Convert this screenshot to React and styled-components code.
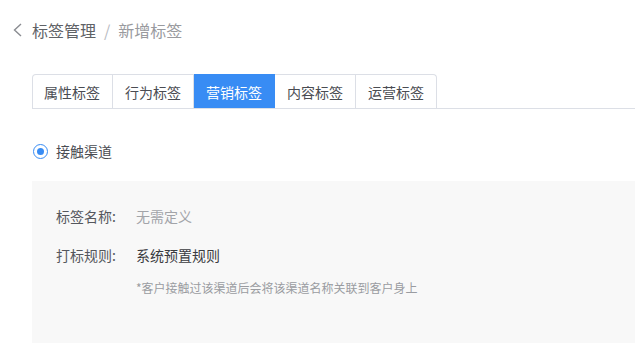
import React from "react";
import styled, { createGlobalStyle } from "styled-components";

const Global = createGlobalStyle`
  html, body { margin: 0; padding: 0; background: #fff; }
  body { font-family: "Noto Sans CJK SC", "Noto Sans", sans-serif; overflow: hidden; }
  * { box-sizing: border-box; }
`;

const Page = styled.div`
  width: 635px;
  height: 348px;
  padding: 18px 0 0 32px;
  overflow: hidden;
`;

const Crumbs = styled.div`
  display: flex;
  align-items: center;
  height: 24px;
  font-size: 16px;
  line-height: 24px;
  margin-left: -20px;
`;

const Back = styled.span`
  display: inline-flex;
  width: 12px;
  margin-right: 8px;
`;

const Crumb = styled.span`
  color: ${(p) => (p.$current ? "#999a9e" : "#606266")};
`;

const Sep = styled.span`
  color: #b8bbc2;
  margin: 0 8px;
`;

const TabBar = styled.div`
  display: flex;
  margin-top: 32px;
  border-bottom: 1px solid #dcdfe6;
`;

const Tab = styled.div`
  flex-shrink: 0;
  white-space: nowrap;
  height: 34px;
  padding: 0 12px;
  display: flex;
  align-items: center;
  justify-content: center;
  font-size: 14px;
  color: ${(p) => (p.$active ? "#fff" : "#4a4c52")};
  background: ${(p) => (p.$active ? "#388cf4" : "#fff")};
  border: 1px solid ${(p) => (p.$active ? "#388cf4" : "#dcdfe6")};
  border-bottom: none;
  border-left: ${(p) => (p.$first ? "1px solid #dcdfe6" : "none")};
  padding-left: ${(p) => (p.$first ? "11px" : "12px")};
  border-radius: ${(p) => (p.$first ? "4px 0 0 0" : p.$last ? "0 4px 0 0" : "0")};
`;

const RadioRow = styled.div`
  display: flex;
  align-items: center;
  margin-top: 32px;
  height: 20px;
  font-size: 14px;
  color: #4a4c52;
`;

const RadioCircle = styled.span`
  width: 15px;
  height: 15px;
  border-radius: 50%;
  border: 1.5px solid #388cf4;
  display: flex;
  align-items: center;
  justify-content: center;
  margin-left: 1px;
  margin-right: 8px;
  &::after {
    content: "";
    width: 7px;
    height: 7px;
    border-radius: 50%;
    background: #388cf4;
  }
`;

const Panel = styled.div`
  margin-top: 20px;
  background: #f8f8f8;
  height: 162px;
  padding: 25px 24px 0;
`;

const Row = styled.div`
  display: flex;
  align-items: center;
  height: 20px;
  font-size: 14px;
  line-height: 20px;
  margin-bottom: ${(p) => p.$mb || 0}px;
`;

const Label = styled.span`
  width: 80px;
  color: #55575d;
`;

const Value = styled.span`
  color: ${(p) => (p.$muted ? "#a2a4a9" : "#3a3b3f")};
`;

const Note = styled.div`
  padding-left: 80px;
  font-size: 12px;
  line-height: 18px;
  color: #9a9ca1;
`;

const tabs = ["属性标签", "行为标签", "营销标签", "内容标签", "运营标签"];

export default function App() {
  return (
    <>
      <Global />
      <Page>
        <Crumbs>
          <Back>
            <svg width="11" height="16" viewBox="0 0 11 16">
              <path d="M9 2 L2.5 8 L9 14" fill="none" stroke="#8a8c91" strokeWidth="1.4" />
            </svg>
          </Back>
          <Crumb>标签管理</Crumb>
          <Sep>/</Sep>
          <Crumb $current>新增标签</Crumb>
        </Crumbs>
        <TabBar>
          {tabs.map((t, i) => (
            <Tab key={t} $active={i === 2} $first={i === 0} $last={i === tabs.length - 1}>
              {t}
            </Tab>
          ))}
        </TabBar>
        <RadioRow>
          <RadioCircle />
          接触渠道
        </RadioRow>
        <Panel>
          <Row $mb={19}>
            <Label>标签名称:</Label>
            <Value $muted>无需定义</Value>
          </Row>
          <Row $mb={14}>
            <Label>打标规则:</Label>
            <Value>系统预置规则</Value>
          </Row>
          <Note>*客户接触过该渠道后会将该渠道名称关联到客户身上</Note>
        </Panel>
      </Page>
    </>
  );
}
